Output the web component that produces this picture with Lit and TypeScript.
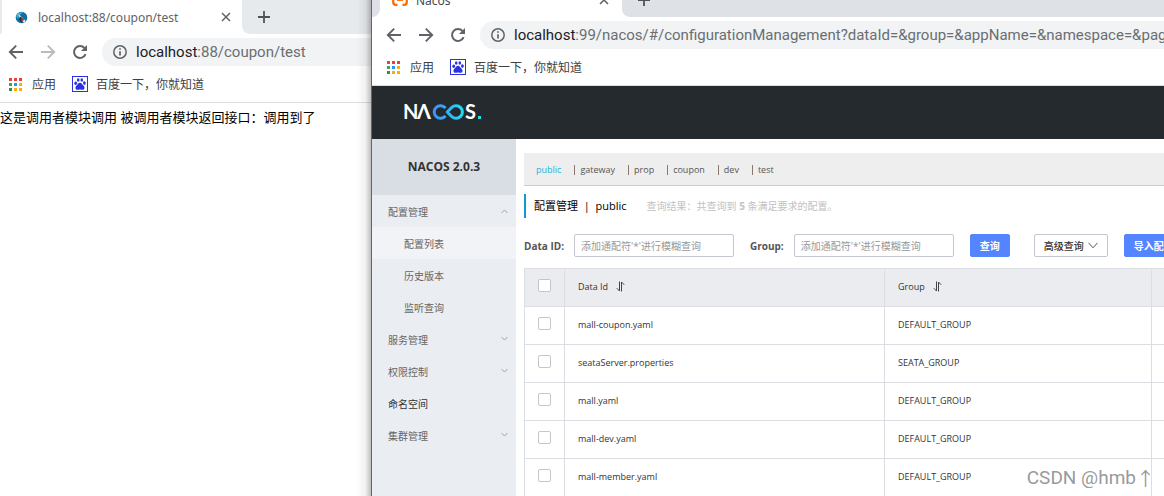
import { LitElement, html, css, svg, nothing } from "lit";
import { customElement, property } from "lit/decorators.js";
import { classMap } from "lit/directives/class-map.js";

const closeIcon = html`<svg class="icon" width="10" height="10" viewBox="0 0 10 10" aria-hidden="true">
  <path d="M1 1L9 9M9 1L1 9" stroke="#5f6368" stroke-width="1.5" fill="none" />
</svg>`;

const plusIcon = html`<svg class="icon" width="12" height="12" viewBox="0 0 12 12" aria-hidden="true">
  <path d="M6 0V12M0 6H12" stroke="#4f5357" stroke-width="1.8" fill="none" />
</svg>`;

const backIcon = html`<svg class="icon" width="16" height="16" viewBox="0 0 16 16" aria-hidden="true">
  <path d="M15 8H2.2M8.2 1.6L1.8 8L8.2 14.4" stroke="currentColor" stroke-width="1.9" fill="none" />
</svg>`;

const forwardIcon = html`<svg class="icon" width="16" height="16" viewBox="0 0 16 16" aria-hidden="true">
  <path d="M1 8H13.8M7.8 1.6L14.2 8L7.8 14.4" stroke="currentColor" stroke-width="1.9" fill="none" />
</svg>`;

const reloadIcon = html`<svg class="icon" width="16" height="16" viewBox="0 0 16 16" aria-hidden="true">
  <path d="M13.6 10.2A6 6 0 1 1 12.6 4.1L14 5.6" stroke="currentColor" stroke-width="2" fill="none" />
  <path d="M15 1V7H9Z" fill="currentColor" />
</svg>`;

const infoIcon = html`<svg class="icon" width="14" height="14" viewBox="0 0 14 14" aria-hidden="true">
  <circle cx="7" cy="7" r="6.2" stroke="#5f6368" stroke-width="1.5" fill="none" />
  <path d="M7 6.2V10.6M7 3.2V4.8" stroke="#5f6368" stroke-width="1.7" fill="none" />
</svg>`;

const appsColors = ["#ea4335", "#ea4335", "#ea4335", "#34a853", "#2196f3", "#fbac05", "#249255", "#fbac05", "#fbac05"];
const appsIcon = html`<svg class="icon" width="13" height="13" viewBox="0 0 13 13" aria-hidden="true">
  ${appsColors.map((c, i) => svg`<rect x=${(i % 3) * 5} y=${Math.floor(i / 3) * 5} width="3" height="3" fill=${c} />`)}
</svg>`;

const pawIcon = html`<svg class="icon" width="16" height="16" viewBox="0 0 16 16" aria-hidden="true">
  <rect x="0.5" y="0.5" width="15" height="15" fill="#fff" stroke="#2932e1" />
  <g fill="#2932e1">
    <ellipse cx="3.7" cy="7.3" rx="1.4" ry="1.8" />
    <ellipse cx="6.2" cy="4" rx="1.3" ry="1.8" />
    <ellipse cx="9.8" cy="4" rx="1.3" ry="1.8" />
    <ellipse cx="12.4" cy="7.1" rx="1.4" ry="1.8" />
    <path d="M8 6.8C9.6 6.8 10.2 8.5 11.6 9.7C13.2 11.2 12.6 13.8 10.6 13.8C9.4 13.8 9 13.4 8 13.4C7 13.4 6.6 13.8 5.4 13.8C3.4 13.8 2.8 11.2 4.4 9.7C5.8 8.5 6.4 6.8 8 6.8Z" />
  </g>
</svg>`;

const globeFavicon = html`<svg class="icon" width="13" height="13" viewBox="0 0 13 13" aria-hidden="true">
  <circle cx="6.5" cy="6.5" r="5.8" fill="#0e6ea6" />
  <path d="M1 5C3 1.6 6 1 8 1.4L4 4.2L3 8Z" fill="#38b3d8" />
  <path d="M3 2.6L10.5 9.8L9 11.8L5 7.6Z" fill="#e9eef0" />
  <path d="M5.4 5.4L9 8.6L6.6 11.8L4 8.4Z" fill="#26303c" />
  <path d="M7 7.2L8.4 8.6L7.2 10.4L6 9Z" fill="#c8443a" />
</svg>`;

const nacosFavicon = html`<svg class="icon" width="16" height="14" viewBox="0 0 16 14" aria-hidden="true">
  <path d="M5.5 1.6H4C2.2 1.6 1.2 2.6 1.2 4.4V9C1.2 10.8 2.2 11.8 4 11.8H5.5M10.5 1.6H12C13.8 1.6 14.8 2.6 14.8 4.4V9C14.8 10.8 13.8 11.8 12 11.8H10.5" stroke="#ff6a00" stroke-width="2.2" fill="none" />
  <path d="M5 7H11" stroke="#ff6a00" stroke-width="1.8" />
</svg>`;

@customElement("browser-window")
class BrowserWindow extends LitElement {
  @property() tabTitle = "";
  @property() host = "";
  @property() path = "";
  @property({ type: Boolean, reflect: true }) front = false;

  static styles = css`
    :host {
      display: flex;
      flex-direction: column;
      min-width: 0;
      overflow: hidden;
      background: #fff;
      font-family: "Noto Sans", "Noto Sans CJK SC", sans-serif;
      color: #3c4043;
    }
    .icon { display: block; flex: none; }
    button {
      border: 0;
      padding: 0;
      background: none;
      color: #5f6368;
    }
    .strip {
      flex: none;
      display: flex;
      flex-direction: column;
      justify-content: flex-end;
      height: 34px;
      overflow: hidden;
      background: #e7eaed;
    }
    :host([front]) .strip { height: 17px; background: #dee1e6; }
    .tabs { display: flex; align-items: center; height: 34px; flex: none; background: #fff; }
    .edge { align-self: stretch; width: 2px; background: #e7eaed; border-bottom-right-radius: 8px; }
    :host([front]) .edge { width: 8px; background: #dee1e6; }
    .tab {
      flex: none;
      display: flex;
      align-items: center;
      gap: 10px;
      box-sizing: border-box;
      width: 240px;
      height: 34px;
      padding: 0 11px 0 13px;
      border-radius: 8px 8px 0 0;
      background: #fff;
      font-size: 12px;
      color: #5f6368;
    }
    :host([front]) .tab { color: #45494d; }
    .title { flex: 1; white-space: nowrap; }
    .rest {
      flex: 1;
      display: flex;
      align-items: center;
      height: 34px;
      padding-left: 16px;
      background: #e7eaed;
      border-bottom-left-radius: 8px;
    }
    :host([front]) .rest { background: #dee1e6; }
    :host([front]) .tab { gap: 8px; width: 242px; padding: 0 13px 0 12px; }
    .toolbar {
      flex: none;
      display: flex;
      align-items: center;
      gap: 16px;
      height: 36px;
      padding-left: 8px;
    }
    :host([front]) .toolbar { padding-left: 14px; }
    .off { color: #b9bcbf; }
    .address {
      flex: 1;
      min-width: 0;
      display: flex;
      align-items: center;
      gap: 9px;
      box-sizing: border-box;
      height: 28px;
      margin-left: -2px;
      padding-left: 11px;
      border-radius: 14px 0 0 14px;
      background: #f1f3f4;
      font-family: Roboto, "Noto Sans", sans-serif;
      font-size: 15px;
      white-space: nowrap;
      overflow: hidden;
    }
    .url { color: #6a6e72; }
    .host { color: #202124; }
    .bookmarks {
      flex: none;
      display: flex;
      align-items: center;
      height: 33px;
      padding: 0 0 4px 9px;
      box-sizing: border-box;
      gap: 16px;
      border-bottom: 1px solid #dadce0;
      font-size: 12px;
    }
    :host([front]) .bookmarks { padding-left: 15px; }
    .bookmarks a {
      display: flex;
      align-items: center;
      gap: 8px;
      color: #3c4043;
      text-decoration: none;
      white-space: nowrap;
    }
    .bookmarks a:first-child { gap: 10px; }
    .page { flex: 1; min-height: 0; display: flex; flex-direction: column; }
  `;

  render() {
    return html`
      <div class="strip">
        <div class="tabs">
          <span class="edge"></span>
          <div class="tab">
            ${this.front ? nacosFavicon : globeFavicon}
            <span class="title">${this.tabTitle}</span>
            <button aria-label="Close tab">${closeIcon}</button>
          </div>
          <div class="rest"><button aria-label="New tab">${plusIcon}</button></div>
        </div>
      </div>
      <div class="toolbar">
        <button aria-label="Back">${backIcon}</button>
        <button class=${classMap({ off: !this.front })} aria-label="Forward">${forwardIcon}</button>
        <button aria-label="Reload">${reloadIcon}</button>
        <div class="address">
          ${infoIcon}
          <span class="url"><span class="host">${this.host}</span>${this.path}</span>
        </div>
      </div>
      <nav class="bookmarks">
        <a href="#">${appsIcon}<span>应用</span></a>
        <a href="#">${pawIcon}<span>百度一下，你就知道</span></a>
      </nav>
      <div class="page"><slot></slot></div>
    `;
  }
}

interface MenuItem {
  label: string;
  level?: number;
  arrow?: "up" | "down";
  active?: boolean;
  strong?: boolean;
}

const menu: MenuItem[] = [
  { label: "配置管理", arrow: "up" },
  { label: "配置列表", level: 2, active: true },
  { label: "历史版本", level: 2 },
  { label: "监听查询", level: 2 },
  { label: "服务管理", arrow: "down" },
  { label: "权限控制", arrow: "down" },
  { label: "命名空间", strong: true },
  { label: "集群管理", arrow: "down" },
];

const namespaces = ["public", "gateway", "prop", "coupon", "dev", "test"];

const configs = [
  ["mall-coupon.yaml", "DEFAULT_GROUP"],
  ["seataServer.properties", "SEATA_GROUP"],
  ["mall.yaml", "DEFAULT_GROUP"],
  ["mall-dev.yaml", "DEFAULT_GROUP"],
  ["mall-member.yaml", "DEFAULT_GROUP"],
];

const sortIcon = html`<svg class="icon" width="9" height="11" viewBox="0 0 9 11" aria-hidden="true">
  <path d="M3.5 0.5V10L0.8 7.2M5.5 10.5V1L8.2 3.8" stroke="#444" stroke-width="1" fill="none" />
</svg>`;

@customElement("nacos-console")
class NacosConsole extends LitElement {
  static styles = css`
    :host {
      flex: 1;
      min-height: 0;
      display: flex;
      flex-direction: column;
      overflow: hidden;
      font: 10px/16px "Open Sans", "Noto Sans CJK SC", sans-serif;
      color: #333;
    }
    .icon { display: block; flex: none; }
    button, input { font: inherit; }
    .top {
      flex: none;
      display: flex;
      align-items: center;
      height: 53px;
      padding-left: 31px;
      background: #252a2f;
    }
    .logo { font: 700 20px "Lato", sans-serif; overflow: visible; }
    .body { flex: 1; min-height: 0; display: flex; overflow: hidden; }
    .side { flex: none; width: 144px; background: #eaedf2; }
    .version {
      margin: 0;
      height: 56px;
      font-size: 12px;
      font-weight: 700;
      line-height: 56px;
      text-align: center;
      background: #d9dee4;
    }
    .item {
      display: flex;
      align-items: center;
      justify-content: space-between;
      height: 32px;
      padding: 2px 8px 0 16px;
      box-sizing: border-box;
      color: #666;
      text-decoration: none;
    }
    .sub { padding-left: 32px; }
    .active { background: #f1f3f7; }
    .strong { color: #333; }
    .main { flex: 1; min-width: 0; padding: 14px 0 0 8px; overflow: hidden; white-space: nowrap; }
    .spaces {
      display: flex;
      align-items: center;
      height: 33px;
      box-sizing: border-box;
      padding: 2px 0 0 12px;
      border-bottom: 1px solid #ccc;
      background: #eee;
      font-size: 9px;
    }
    .spaces a { color: #555; text-decoration: none; }
    .spaces a.current { color: #24b4d8; }
    .bar { width: 1px; height: 10px; margin: 0 5px 0 13px; background: #8a7770; }
    .heading {
      display: flex;
      align-items: center;
      gap: 20px;
      height: 24px;
      margin-top: 8px;
      padding-left: 8px;
      border-left: 2px solid #0d9bd0;
      color: #c2c2c2;
    }
    h1 { margin: 0; font-size: 11px; font-weight: 400; color: #000; white-space: pre; }
    .form { display: flex; align-items: center; height: 23px; margin: 16px 0 11px; }
    .form label { flex: none; font-weight: 700; color: #555; }
    .form input {
      flex: none;
      width: 160px;
      height: 23px;
      box-sizing: border-box;
      margin: 0 16px 0 10px;
      padding: 0 6px;
      border: 1px solid #c4c6cf;
      border-radius: 2px;
      background: #fff;
      outline: none;
    }
    .form input::placeholder { color: #999; opacity: 1; }
    .form button {
      flex: none;
      display: flex;
      align-items: center;
      gap: 4px;
      height: 23px;
      padding: 0 9px;
      border: 1px solid #5584ff;
      border-radius: 2px;
      background: #5584ff;
      color: #fff;
      font-weight: 700;
    }
    .form button.plain { margin: 0 16px 0 24px; border-color: #c4c6cf; background: #fff; color: #333; font-weight: 500; }
    table { width: 100%; table-layout: fixed; border-collapse: collapse; font-size: 9px; }
    .c-check { width: 40px; }
    .c-id { width: 320px; }
    .c-group { width: 267px; }
    th, td {
      height: 35px;
      padding: 0 13px 2px;
      border: 1px solid #dcdee3;
      border-right: 0;
      font-weight: 400;
      text-align: left;
    }
    th { background: #ebecf0; }
    td { background: #fff; }
    .sort { display: flex; align-items: center; gap: 8px; padding: 0; border: 0; background: none; color: #333; }
    input[type="checkbox"] {
      appearance: none;
      display: block;
      width: 13px;
      height: 13px;
      margin: 0 0 2px;
      border: 1px solid #c4c6cf;
      border-radius: 2px;
      background: #fff;
    }
  `;

  private arrow(dir: "up" | "down") {
    return html`<svg class="icon" width="7" height="8" viewBox="0 0 7 8" aria-hidden="true">
      <path d=${dir === "up" ? "M0.5 5L3.5 2L6.5 5" : "M0.5 1L3.5 4L6.5 1"} stroke="#a0a3a8" fill="none" />
    </svg>`;
  }

  render() {
    return html`
      <header class="top">
        <svg class="logo" width="80" height="20" viewBox="0 0 80 20" role="img" aria-label="NACOS.">
          <defs>
            <linearGradient id="loop" gradientUnits="userSpaceOnUse" x1="28" y1="0" x2="63" y2="0">
              <stop offset="0" stop-color="#4386fb" />
              <stop offset="1" stop-color="#1fe0ee" />
            </linearGradient>
          </defs>
          <text x="0" y="16" fill="#fff">N</text>
          <text x="14" y="16" fill="#fff">Λ</text>
          <path d="M43.5 5.2A6.3 6.3 0 1 0 43.5 12.8M45.2 9L49.8 4.4A6.3 6.3 0 1 1 49.8 13.6Z" transform="translate(-1 0)" fill="none" stroke="url(#loop)" stroke-width="3" stroke-linejoin="round" />
          <text x="62" y="16" fill="#fff">S</text>
          <rect x="75" y="13" width="3" height="3" fill="#1fe0ee" />
        </svg>
      </header>
      <div class="body">
        <nav class="side">
          <h2 class="version">NACOS 2.0.3</h2>
          ${menu.map(
            (m) => html`<a href="#" class=${classMap({ item: true, sub: m.level === 2, active: !!m.active, strong: !!m.strong })}>
              ${m.label}${m.arrow ? this.arrow(m.arrow) : nothing}
            </a>`
          )}
        </nav>
        <main class="main">
          <div class="spaces">
            ${namespaces.map(
              (n, i) => html`${i ? html`<span class="bar"></span>` : nothing}<a href="#" class=${classMap({ current: i === 0 })}>${n}</a>`
            )}
          </div>
          <div class="heading">
            <h1>配置管理  |  public</h1>
            <span>查询结果：共查询到 <b>5</b> 条满足要求的配置。</span>
          </div>
          <form class="form">
            <label for="data-id">Data ID:</label>
            <input id="data-id" type="text" placeholder="添加通配符'*'进行模糊查询" />
            <label for="group">Group:</label>
            <input id="group" type="text" placeholder="添加通配符'*'进行模糊查询" />
            <button type="button">查询</button>
            <button type="button" class="plain">
              高级查询
              <svg class="icon" width="10" height="7" viewBox="0 0 10 7" aria-hidden="true">
                <path d="M0.5 0.8L5 5.8L9.5 0.8" stroke="#555" fill="none" />
              </svg>
            </button>
            <button type="button">导入配置</button>
          </form>
          <table>
            <colgroup><col class="c-check" /><col class="c-id" /><col class="c-group" /><col /></colgroup>
            <thead>
              <tr>
                <th><input type="checkbox" aria-label="Select all" /></th>
                <th><button class="sort">Data Id ${sortIcon}</button></th>
                <th><button class="sort">Group ${sortIcon}</button></th>
                <th></th>
              </tr>
            </thead>
            <tbody>
              ${configs.map(
                ([id, group]) => html`<tr>
                  <td><input type="checkbox" aria-label=${id} /></td>
                  <td>${id}</td>
                  <td>${group}</td>
                  <td></td>
                </tr>`
              )}
            </tbody>
          </table>
        </main>
      </div>
    `;
  }
}

@customElement("app-root")
class AppRoot extends LitElement {
  static styles = css`
    :host { position: relative; display: flex; height: 100vh; overflow: hidden; background: #fff; }
    .back { flex: none; width: 371px; }
    .front { flex: 1; border-left: 1px solid #666; }
    .shade {
      position: absolute;
      top: 0;
      bottom: 0;
      left: 357px;
      width: 14px;
      background: linear-gradient(to right, rgba(0, 0, 0, 0), rgba(0, 0, 0, 0.06) 60%, rgba(0, 0, 0, 0.25));
    }
    .reply { margin: 0; padding-top: 5px; font: 13px/20px "Liberation Sans", "Noto Sans CJK SC", sans-serif; color: #000; white-space: nowrap; }
    .mark {
      position: absolute;
      right: 9px;
      bottom: 6px;
      display: flex;
      font: 19px/24px Roboto, "Noto Sans CJK SC", sans-serif;
      color: rgba(140, 140, 140, 0.9);
      text-shadow: 1px 1px 0 #fff;
    }
    .up { font-family: "Noto Sans CJK SC", sans-serif; }
  `;

  render() {
    return html`
      <browser-window class="back" tabTitle="localhost:88/coupon/test" host="localhost" path=":88/coupon/test">
        <p class="reply">这是调用者模块调用 被调用者模块返回接口：调用到了</p>
      </browser-window>
      <div class="shade"></div>
      <browser-window
        class="front"
        front
        tabTitle="Nacos"
        host="localhost"
        path=":99/nacos/#/configurationManagement?dataId=&group=&appName=&namespace=&pageSize=&pageNo="
      >
        <nacos-console></nacos-console>
      </browser-window>
      <div class="mark"><span>CSDN @hmb</span><span class="up">↑</span></div>
    `;
  }
}
